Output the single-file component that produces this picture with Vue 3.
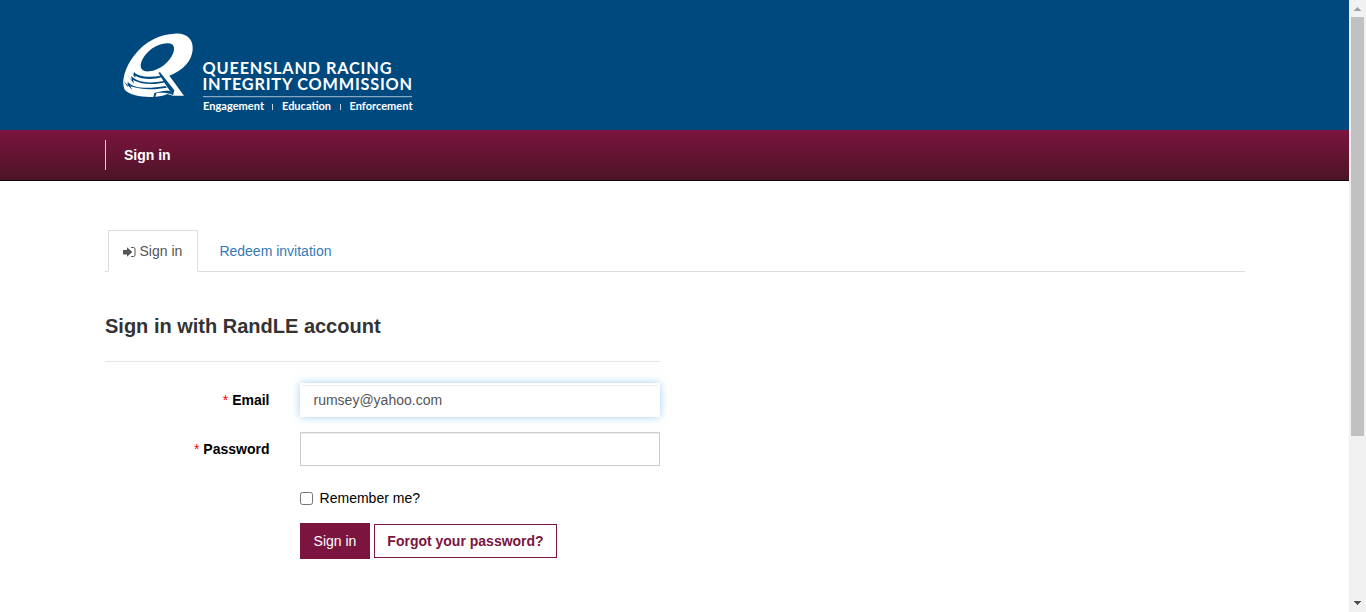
<script setup>
import { ref } from 'vue'

const email = ref('rumsey@yahoo.com')
const password = ref('')
const remember = ref(false)
</script>

<template>
  <div class="window">
    <div class="page">
      <header class="brand">
        <svg class="logo" width="300" height="90" viewBox="0 0 300 90">
          <g transform="scale(.33333)">
            <path fill="#fff" fill-rule="evenodd" d="M180 26C214 23 236 42 233 75C230 108 204 137 163 152L207 212H174L157 207C145 213 132 215 119 215C87 218 45 211 29 194C17 168 31 126 57 92C89 49 136 27 180 26ZM160 55C127 53 93 79 80 108C71 131 83 141 103 139C134 135 164 112 175 83C181 66 175 56 160 55Z" />
            <g fill="#00497f">
              <path d="M130 143L135 142L178 196L174 211L155 184Z" />
              <path d="M47 138L55 151L57 140C66 154 100 159 137 152L142 156C115 165 81 164 61 152L61 159Z" />
              <path d="M36 149L50 166L49 153C69 174 106 176 147 168L151 172C120 180 82 180 54 165L57 176Z" />
              <path d="M26 168L38 186L38 170C57 194 108 190 151 183L156 188C125 193 87 197 46 184L52 195Z" />
              <path d="M130 201C145 197 158 196 165 198L175 211C158 203 142 203 125 204L120 217H115L118 204Z" />
            </g>
          </g>
          <g class="logo-text" fill="#fff">
            <text x="87.5" y="48.5" font-size="16.3" textLength="189" lengthAdjust="spacing">QUEENSLAND RACING</text>
            <text x="87.5" y="65" font-size="16.3" textLength="209.5" lengthAdjust="spacing">INTEGRITY COMMISSION</text>
            <g class="motto" font-size="10.5">
              <text x="88" y="85" textLength="61" lengthAdjust="spacingAndGlyphs">Engagement</text>
              <text x="167" y="85" textLength="49" lengthAdjust="spacingAndGlyphs">Education</text>
              <text x="234.5" y="85" textLength="63" lengthAdjust="spacingAndGlyphs">Enforcement</text>
            </g>
          </g>
          <path d="M88 71.7H297" stroke="#a5bfd3" />
          <path d="M157.5 79V85M225.5 79V85" stroke="#c4d5e2" />
        </svg>
      </header>

      <nav class="nav"><a class="nav-link">Sign in</a></nav>

      <main>
        <div class="tabs">
          <a class="tab active">
            <svg class="icon" width="13" height="12" viewBox="0 0 13 12">
              <path fill="#555" d="M0 4H4V1.2L9.3 6L4 10.8V8.5H0Z" />
              <path d="M8 1.5H10.5Q12 1.5 12 3V9Q12 10.5 10.5 10.5H8" fill="none" stroke="#555" />
            </svg>
            <span>Sign in</span>
          </a>
          <a class="tab link">Redeem invitation</a>
        </div>

        <form class="form" @submit.prevent>
          <h2>Sign in with RandLE account</h2>
          <div class="row">
            <label for="email"><span class="star">*</span> Email</label>
            <input id="email" v-model="email" class="field focused" type="text">
          </div>
          <div class="row">
            <label for="password"><span class="star">*</span> Password</label>
            <input id="password" v-model="password" class="field" type="password">
          </div>
          <label class="remember"><input v-model="remember" type="checkbox"><span>Remember me?</span></label>
          <div class="actions">
            <button class="primary">Sign in</button>
            <button class="secondary" type="button">Forgot your password?</button>
          </div>
        </form>
      </main>
    </div>

    <div class="scrollbar">
      <svg width="17" height="17" viewBox="0 0 17 17" shape-rendering="crispEdges"><path fill="#a3a3a3" d="M5 11V10H6V9H7V8H8V7H9V8H10V9H11V10H12V11Z" /></svg>
      <div class="thumb"></div>
      <svg class="down" width="17" height="17" viewBox="0 0 17 17" shape-rendering="crispEdges"><path fill="#505050" d="M5 6V7H6V8H7V9H8V10H9V9H10V8H11V7H12V6Z" /></svg>
    </div>
  </div>
</template>

<style>
body { margin: 0; background: #fff; }
</style>

<style scoped>
.window {
  display: flex;
  height: 612px;
  overflow: hidden;
  font: 14px/20px "Liberation Sans", Arial, sans-serif;
  color: #000;
}
.window *, .window { box-sizing: border-box; }
.page { flex: 1; min-width: 0; }
.brand { height: 130px; padding: 25px 0 0 115px; background: #00497f; }
.logo { display: block; }
.logo-text { font-family: Lato, sans-serif; font-weight: 700; }
.nav {
  display: flex;
  height: 51px;
  padding: 10px 0 10px 105px;
  background: linear-gradient(#7b143f, #4d1425);
  border-bottom: 1px solid #080808;
}
.nav-link {
  height: 30px;
  padding-left: 18px;
  border-left: 1px solid #e3cdd6;
  color: #fff;
  font-weight: 700;
  line-height: 30px;
}
main { width: 1140px; margin: 49px 0 0 105px; }
.tabs { display: flex; height: 42px; padding-left: 3px; border-bottom: 1px solid #ddd; }
.tab { height: 42px; line-height: 42px; }
.tab.active {
  display: flex;
  align-items: center;
  gap: 3.5px;
  width: 90px;
  padding-left: 14px;
  background: #fff;
  border: 1px solid #ddd;
  border-bottom-color: #fff;
  color: #555;
}
.icon { flex: none; margin-top: 2px; }
.link { margin-left: 21.4px; color: #337ab7; }
.form { width: 555px; }
h2 {
  height: 67px;
  margin: 23px 0 21px;
  padding-top: 19px;
  border-bottom: 1px solid #e5e5e5;
  color: #333;
  font-size: 20px;
  line-height: 24px;
}
.row { display: flex; height: 34px; margin-bottom: 15px; }
.row label { width: 164.5px; margin-right: 30.5px; text-align: right; font-weight: 700; line-height: 34px; }
.star { color: red; font-weight: 400; }
.field {
  width: 360px;
  height: 34px;
  padding: 6px 12px;
  border: 1px solid #ccc;
  border-radius: 0;
  outline: 0;
  background: #fff;
  box-shadow: inset 0 1px 1px rgba(0, 0, 0, .075);
  color: #555;
  font: inherit;
}
.focused { padding-left: 11.5px; border: 2px solid #fff; box-shadow: inset 0 1px 1px rgba(0, 0, 0, .075), 0 0 8px rgba(102, 175, 233, .6); }
.remember { display: flex; align-items: center; gap: 6.6px; height: 20px; margin: 22px 0 15px 195px; }
.remember input { width: 13px; height: 13px; margin: 0; }
.actions { display: flex; align-items: center; gap: 4px; margin-left: 195px; }
button { padding: 0; border: 1px solid #7b143f; font: inherit; }
.primary { width: 70px; height: 36px; background: #7b143f; color: #fff; }
.secondary { width: 183px; height: 34px; background: #fff; color: #7b143f; font-weight: 700; }
.scrollbar { display: flex; flex-direction: column; width: 17px; background: #f1f1f1; }
.thumb { width: 13px; height: 419px; margin-left: 2px; background: #c1c1c1; }
.down { margin-top: auto; }
</style>
